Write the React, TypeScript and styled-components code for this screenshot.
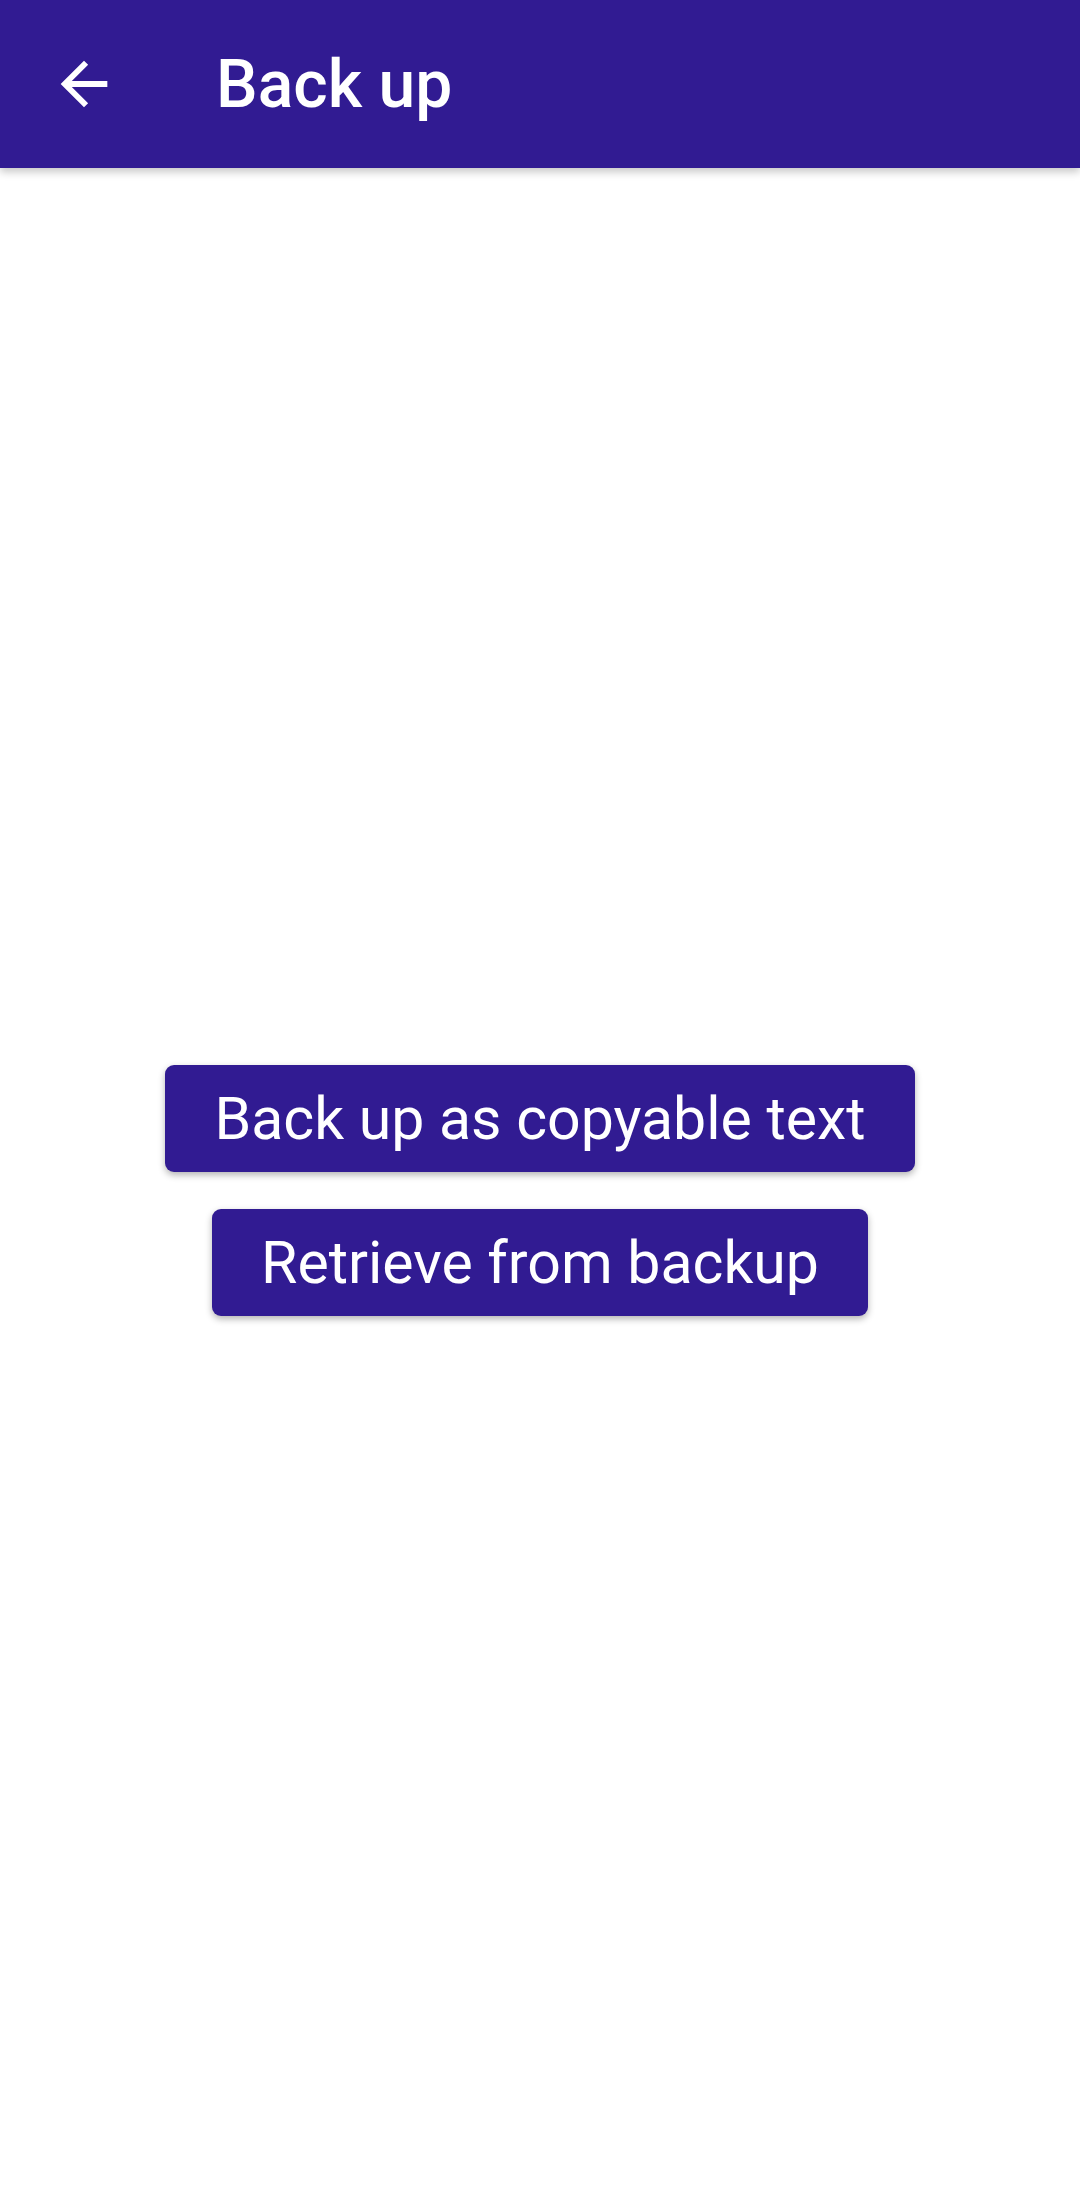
import styled, { createGlobalStyle } from "styled-components";

const GlobalStyle = createGlobalStyle`
    html, body {
        margin: 0;
        padding: 0;
        background: #ffffff;
        font-family: Roboto, "Noto Sans", "Liberation Sans", sans-serif;
    }
`;

const Screen = styled.div`
    width: 1080px;
    height: 2212px;
    display: flex;
    flex-direction: column;
    background: #ffffff;
    overflow: hidden;
`;

const TopBar = styled.header`
    height: 168px;
    flex-shrink: 0;
    background-color: #311b92;
    display: flex;
    align-items: center;
    box-shadow: 0 4px 8px rgba(0, 0, 0, 0.22);
    position: relative;
    z-index: 1;

    .back-btn {
        width: 70px;
        height: 70px;
        margin-left: 49px;
        display: flex;
        align-items: center;
        justify-content: center;
    }

    h1 {
        margin: 0 0 0 97px;
        color: #ffffff;
        font-size: 66px;
        font-weight: 500;
        letter-spacing: 0;
    }
`;

const Content = styled.main`
    flex: 1;
    display: flex;
    flex-direction: column;
    align-items: center;
    justify-content: center;
    gap: 37px;
`;

const ActionButton = styled.button`
    height: 107px;
    padding: 0 49px;
    border: none;
    border-radius: 9px;
    background-color: #311b92;
    color: #ffffff;
    font-family: Roboto, "Noto Sans", "Liberation Sans", sans-serif;
    font-size: 59px;
    font-weight: 400;
    box-shadow: 0 3px 7px rgba(0, 0, 0, 0.3);
    cursor: pointer;
`;

export default function App() {
    const actions = ["Back up as copyable text", "Retrieve from backup"];

    return (
        <Screen>
            <GlobalStyle />
            <TopBar>
                <div className="back-btn">
                    <svg width="70" height="70" viewBox="0 0 24 24">
                        <path d="M20 11H7.83l5.59-5.59L12 4l-8 8 8 8 1.41-1.41L7.83 13H20v-2z" fill="#ffffff" />
                    </svg>
                </div>
                <h1>Back up</h1>
            </TopBar>
            <Content>
                {actions.map((label, key) => (
                    <ActionButton key={key}>{label}</ActionButton>
                ))}
            </Content>
        </Screen>
    );
}
